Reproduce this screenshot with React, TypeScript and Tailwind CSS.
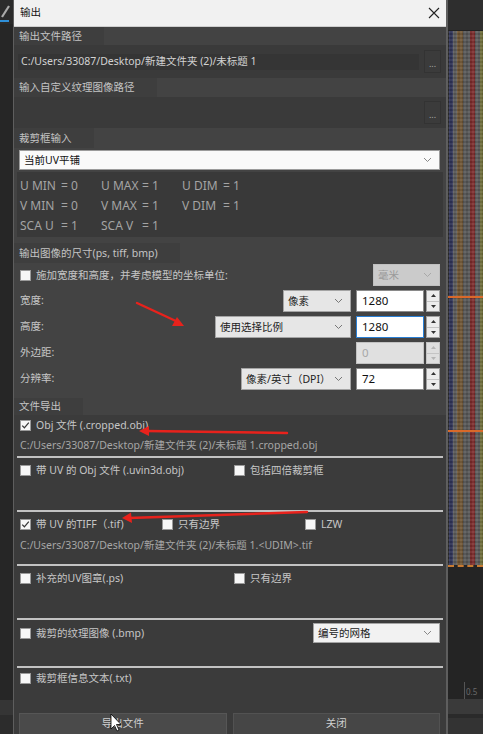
import React from "react";

const FONT = "font-['Noto_Sans','Noto_Sans_CJK_SC',sans-serif]";

const Chevron = ({ c = "#777" }: { c?: string }) => (
  <svg width="9" height="6" viewBox="0 0 9 6">
    <path d="M1 1l3.5 3.5L8 1" fill="none" stroke={c} strokeWidth="1" />
  </svg>
);

function Select({ text, cls, textCls, chev = "#777" }: { text: string; cls: string; textCls: string; chev?: string }) {
  return (
    <div className={`flex items-center justify-between border pl-[4px] pr-[7px] ${cls}`}>
      <span className={`text-[10.5px] leading-none ${textCls}`}>{text}</span>
      <Chevron c={chev} />
    </div>
  );
}

const Check = ({ checked = false }: { checked?: boolean }) => (
  <div className="w-[11px] h-[11px] bg-[#f7f7f7] border border-[#9a9a9a] flex items-center justify-center shrink-0">
    {checked && (
      <svg width="9" height="9" viewBox="0 0 9 9">
        <path d="M1.2 4.6l2.2 2.2L7.8 1.6" fill="none" stroke="#3a3a3a" strokeWidth="1.3" />
      </svg>
    )}
  </div>
);

const CheckLabel = ({ checked = false, text, cls = "" }: { checked?: boolean; text: string; cls?: string }) => (
  <div className={`flex items-center gap-[5px] ${cls}`}>
    <Check checked={checked} />
    <span className="text-[10.5px] leading-none text-[#c6c6c6]">{text}</span>
  </div>
);

const Spin = ({ disabled = false }: { disabled?: boolean }) => {
  const c = disabled ? "#b5b5b5" : "#333";
  return (
    <div className={`w-[14px] h-[22px] flex flex-col border ${disabled ? "border-[#c4c4c4] bg-[#dedede]" : "border-[#a0a0a0] bg-[#ececec]"}`}>
      <div className="flex-1 flex items-center justify-center border-b border-[#c4c4c4]">
        <svg width="5" height="3" viewBox="0 0 5 3"><path d="M0 3L2.5 0L5 3Z" fill={c} /></svg>
      </div>
      <div className="flex-1 flex items-center justify-center">
        <svg width="5" height="3" viewBox="0 0 5 3"><path d="M0 0L2.5 3L5 0Z" fill={c} /></svg>
      </div>
    </div>
  );
};

const NumInput = ({ v, focus = false, disabled = false }: { v: string; focus?: boolean; disabled?: boolean }) => (
  <div className="flex items-center gap-[2px]">
    <div
      className={`w-[68px] h-[22px] flex items-center pl-[5px] border text-[11.5px] ${
        disabled
          ? "bg-[#e0e0e0] border-[#c2c2c2] text-[#a8a8a8]"
          : focus
          ? "bg-white border-[#2a7fd4] text-[#111]"
          : "bg-white border-[#8a8a8a] text-[#111]"
      }`}
    >
      {v}
    </div>
    <Spin disabled={disabled} />
  </div>
);

const Header = ({ text, cls }: { text: string; cls: string }) => (
  <div className={`flex items-center ${cls}`}>
    <div className="h-full flex items-center pl-[5px] pr-[22px] bg-[#3e3e3e] text-[10.5px] text-[#c4c4c4] leading-none">
      {text}
    </div>
  </div>
);

const Dots = () => (
  <div className="w-[17px] h-[23px] bg-[#3b3b3b] border border-[#333] flex items-center justify-center text-[#a8a8a8] text-[9px] leading-none pt-[4px]">
    ...
  </div>
);

const Line = () => <div className="mx-[3px] h-[2px] bg-[#c2c2c2]" />;

function Dialog() {
  return (
    <div className="w-[435px] h-[734px] flex flex-col border-l border-r-2 border-[#5e5e5e] bg-[#434343]">
      {/* Title bar */}
      <div className="h-[27px] shrink-0 flex items-center justify-between pl-[6px] pr-[6px] bg-[#f1f1f1] border-b border-[#cfcfcf]">
        <span className="text-[10.5px] text-[#111]">输出</span>
        <svg width="12" height="12" viewBox="0 0 12 12">
          <path d="M1 1L11 11M11 1L1 11" stroke="#222" strokeWidth="1.1" />
        </svg>
      </div>

      {/* output path */}
      <Header text="输出文件路径" cls="h-[18px]" />
      <div className="h-[33px] flex items-center pl-[4px] pr-[5px] bg-[#3a3a3a] gap-[5px]">
        <div className="flex-1 h-[16px] bg-[#353535] flex items-center pl-[3px] text-[10.5px] text-[#d2d2d2] leading-none">
          C:/Users/33087/Desktop/新建文件夹 (2)/未标题 1
        </div>
        <Dots />
      </div>

      <Header text="输入自定义纹理图像路径" cls="h-[19px]" />
      <div className="h-[31px] flex items-center justify-end pr-[5px] bg-[#3a3a3a]">
        <Dots />
      </div>

      <Header text="裁剪框输入" cls="h-[20px]" />
      <div className="h-[24px] flex items-start pt-[2px] pl-[5px] pr-[6px]">
        <Select
          text="当前UV平铺"
          cls="w-full h-[20px] bg-[#fafafa] border-[#9c9c9c]"
          textCls="text-[#111]"
          chev="#888"
        />
      </div>
      <div className="bg-[#393939] mx-[3px] pt-[4px] pb-[1px] pl-[3px] text-[12px] text-[#a4a4a4]">
        {[
          [["U MIN", "= 0"], ["U MAX", "= 1"], ["U DIM", "= 1"]],
          [["V MIN", "= 0"], ["V MAX", "= 1"], ["V DIM", "= 1"]],
          [["SCA U", "= 1"], ["SCA V", "= 1"]],
        ].map((row, i) => (
          <div key={i} className="h-[20px] flex items-center">
            {row.map(([a, b], j) => (
              <div key={j} className="w-[81px] flex">
                <span className="w-[41px]">{a}</span>
                <span>{b}</span>
              </div>
            ))}
          </div>
        ))}
      </div>

      <Header text="输出图像的尺寸(ps, tiff, bmp)" cls="h-[20px] mt-[6px]" />
      <div className="flex flex-col gap-[4px] pl-[6px] pr-[6px] mt-[1px]">
        <div className="h-[22px] flex items-center justify-between">
          <CheckLabel text="施加宽度和高度，并考虑模型的坐标单位:" />
          <Select text="毫米" cls="w-[67px] h-[22px] bg-[#cbcbcb] border-[#c0c0c0]" textCls="text-[#9a9a9a]" chev="#a8a8a8" />
        </div>
        <div className="h-[22px] flex items-center">
          <span className="flex-1 text-[10.5px] text-[#c6c6c6]">宽度:</span>
          <Select text="像素" cls="w-[68px] h-[22px] bg-[#e6e6e6] border-[#a4a4a4]" textCls="text-[#222]" />
          <div className="w-[5px]" />
          <NumInput v="1280" />
        </div>
        <div className="h-[22px] flex items-center">
          <span className="flex-1 text-[10.5px] text-[#c6c6c6]">高度:</span>
          <Select text="使用选择比例" cls="w-[136px] h-[22px] bg-[#e6e6e6] border-[#a4a4a4]" textCls="text-[#222]" />
          <div className="w-[5px]" />
          <NumInput v="1280" focus />
        </div>
        <div className="h-[22px] flex items-center">
          <span className="flex-1 text-[10.5px] text-[#c6c6c6]">外边距:</span>
          <NumInput v="0" disabled />
        </div>
        <div className="h-[22px] flex items-center">
          <span className="flex-1 text-[10.5px] text-[#c6c6c6]">分辨率:</span>
          <Select text="像素/英寸（DPI）" cls="w-[110px] h-[22px] bg-[#e6e6e6] border-[#a4a4a4]" textCls="text-[#222]" />
          <div className="w-[5px]" />
          <NumInput v="72" />
        </div>
      </div>

      <Header text="文件导出" cls="h-[17px] mt-[8px]" />
      <div className="flex-1 flex flex-col bg-[#3b3b3b]">
        <div className="h-[20px] flex items-center pl-[6px]">
          <CheckLabel checked text="Obj 文件 (.cropped.obj)" />
        </div>
        <div className="h-[21px] flex items-center pl-[6px] text-[10.5px] text-[#a6a6a6]">
          C:/Users/33087/Desktop/新建文件夹 (2)/未标题 1.cropped.obj
        </div>
        <Line />
        <div className="h-[52px] pl-[6px] pt-[6px]">
          <div className="h-[12px] flex items-center">
            <CheckLabel text="带 UV 的 Obj 文件 (.uvin3d.obj)" cls="w-[214px]" />
            <CheckLabel text="包括四倍裁剪框" />
          </div>
        </div>
        <Line />
        <div className="h-[24px] flex items-center pl-[6px]">
          <CheckLabel checked text="带 UV 的TIFF（.tif)" cls="w-[142px]" />
          <CheckLabel text="只有边界" cls="w-[143px]" />
          <CheckLabel text="LZW" />
        </div>
        <div className="h-[20px] flex items-center pl-[6px] text-[10.5px] text-[#a6a6a6]">
          C:/Users/33087/Desktop/新建文件夹 (2)/未标题 1.&lt;UDIM&gt;.tif
        </div>
        <div className="h-[8px]" />
        <Line />
        <div className="h-[52px] pl-[6px] pt-[6px]">
          <div className="h-[12px] flex items-center">
            <CheckLabel text="补充的UV图章(.ps)" cls="w-[214px]" />
            <CheckLabel text="只有边界" />
          </div>
        </div>
        <Line />
        <div className="h-[26px] flex items-center justify-between pl-[6px] pr-[6px]">
          <CheckLabel text="裁剪的纹理图像 (.bmp)" />
          <Select text="编号的网格" cls="w-[127px] h-[20px] bg-[#f2f2f2] border-[#a4a4a4]" textCls="text-[#222]" chev="#888" />
        </div>
        <div className="h-[20px]" />
        <Line />
        <div className="h-[20px] flex items-center pl-[6px]">
          <CheckLabel text="裁剪框信息文本(.txt)" />
        </div>
        <div className="flex-1" />
        <div className="flex gap-[6px] pl-[5px] pr-[6px] h-[21px]">
          <div className="flex-1 bg-[#4a4a4a] border-t border-l border-r border-[#565656] flex items-center justify-center text-[10.5px] text-[#cfcfcf]">
            导出文件
          </div>
          <div className="flex-1 bg-[#464646] border-t border-l border-r border-[#525252] flex items-center justify-center text-[10.5px] text-[#cfcfcf]">
            关闭
          </div>
        </div>
      </div>
    </div>
  );
}

function RightStrip() {
  return (
    <div className="w-[35px] h-[734px] flex flex-col bg-[#252525]">
      <div className="h-[31px] bg-[#2e2e2e] border-b border-[#222]" />
      <div className="relative h-[534px] flex">
        <div className="w-[1px] bg-[#1e1e1e]" />
        <div className="w-[4px] bg-[#2f3458]" />
        <div className="w-[4px] bg-[#5b5b5b]" />
        <div className="w-[6px] bg-[#6e5332]" />
        <div className="w-[7px] bg-[#555555]" />
        <div className="w-[5px] bg-[#7c2a2a]" />
        <div className="w-[5px] bg-[#5a5a5a]" />
        <div className="w-[3px] bg-[#6b6a36]" />
        <div className="absolute inset-0 bg-[repeating-linear-gradient(0deg,rgba(255,255,255,0.06)_0px,rgba(255,255,255,0.06)_2px,rgba(0,0,0,0.06)_2px,rgba(0,0,0,0.06)_4px),repeating-linear-gradient(90deg,rgba(255,255,255,0.05)_0px,rgba(255,255,255,0.05)_2px,rgba(0,0,0,0.05)_2px,rgba(0,0,0,0.05)_4px)]" />
        <div className="absolute left-0 right-0 top-[265px] h-[2px] bg-[#d9692a]" />
        <div className="absolute left-0 right-0 top-[399px] h-[2px] bg-[#d9692a]" />
      </div>
      <div className="h-[2px] border-t-2 border-dashed border-[#c87a30]" />
      <div className="relative h-[132px] bg-[#242424]">
        <div className="absolute left-[16px] top-[115px] w-[1px] h-[17px] bg-[#555]" />
        <span className="absolute left-[18px] top-[121px] text-[8px] leading-none text-[#6a6a6a]">0.5</span>
      </div>
      <div className="h-[15px] bg-[#3a3a3a]" />
      <div className="h-[4px] bg-[#2a2a2a]" />
      <div className="flex-1 bg-[#333]" />
    </div>
  );
}

function LeftStrip() {
  return (
    <div className="w-[13px] h-[734px] flex flex-col bg-[#262626]">
      <div className="h-[24px] relative bg-[#2b2b2b]">
        <svg width="13" height="22" viewBox="0 0 13 22" className="absolute left-0 top-0">
          <path d="M2 17L9 6" stroke="#aaa" strokeWidth="2.2" />
          <path d="M0 21H9" stroke="#2f8fd8" strokeWidth="2" />
        </svg>
      </div>
      <div className="flex-1" />
      <div className="h-[15px] bg-[#353535]" />
      <div className="h-[19px] bg-[#2c2c2c]" />
    </div>
  );
}

export default function App() {
  return (
    <div className={`relative w-[483px] h-[734px] overflow-hidden flex ${FONT}`}>
      <LeftStrip />
      <Dialog />
      <RightStrip />
      {/* red annotation arrows */}
      <svg className="absolute left-0 top-0 pointer-events-none" width="483" height="734" viewBox="0 0 483 734">
        <g stroke="#e8221c" strokeWidth="2.4" fill="none" strokeLinecap="round">
          <path d="M137 303L178 322" />
          <path d="M287 433L146 431" />
          <path d="M307 512L129 518" />
        </g>
        <g fill="#e8221c">
          <path d="M184 326L172 326L177 317Z" />
          <path d="M139 431L149 426L149 436Z" />
          <path d="M122 518L131 512.5L132 523Z" />
        </g>
        {/* mouse cursor */}
        <path d="M111 714L111 729L114.5 725.5L117 731L119 730L116.5 724.5L121 724.5Z" fill="#fff" stroke="#000" strokeWidth="0.8" />
      </svg>
    </div>
  );
}
